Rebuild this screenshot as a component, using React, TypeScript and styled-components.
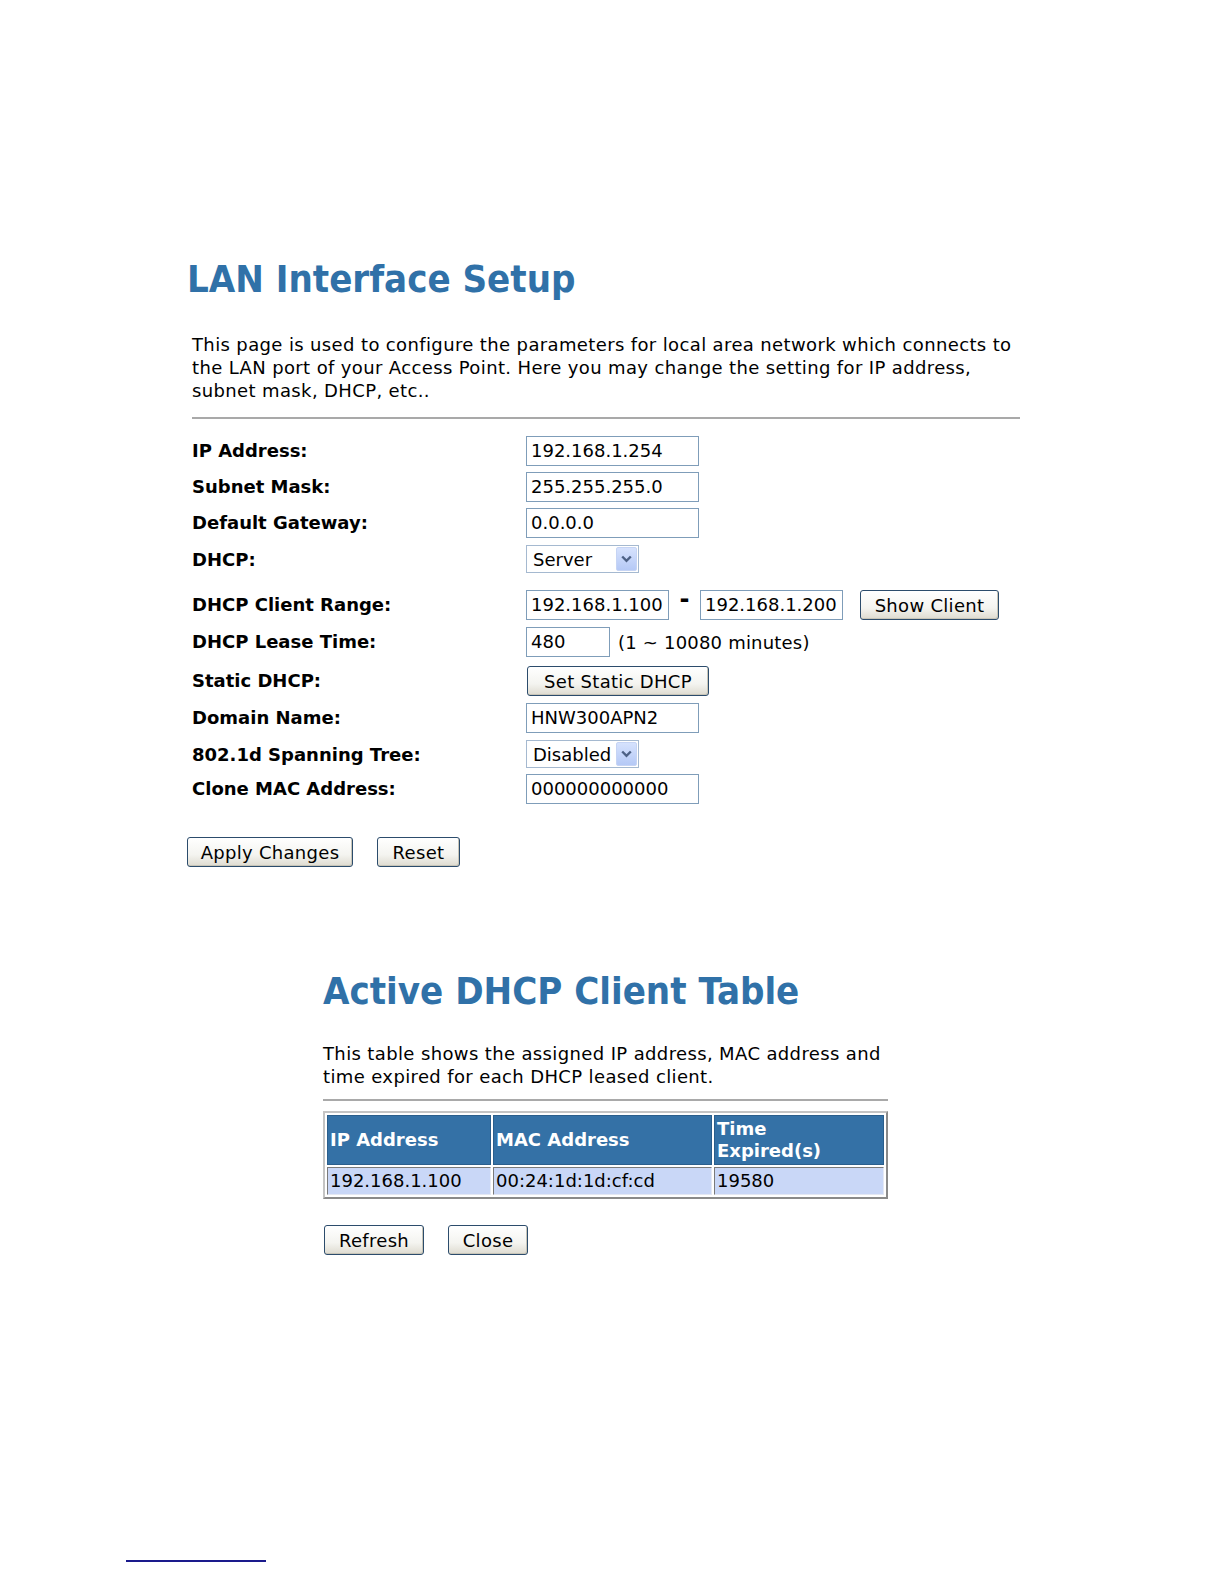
import styled, { createGlobalStyle } from "styled-components";

const GlobalStyle = createGlobalStyle`
  html, body {
    margin: 0;
    padding: 0;
    background: #fff;
    overflow: hidden;
  }
  body {
    font-family: "DejaVu Sans", Verdana, sans-serif;
    color: #000;
  }
`;

const Page = styled.div`
  width: 1224px;
  height: 1584px;
  overflow: hidden;
  padding-top: 256px;
  box-sizing: border-box;
`;

const Section = styled.section<{ $left: number; $width: number; $top?: number }>`
  margin-left: ${(p) => p.$left}px;
  margin-top: ${(p) => p.$top ?? 0}px;
  width: ${(p) => p.$width}px;
`;

const Title = styled.h1`
  margin: 0;
  font-family: "DejaVu Sans Condensed", "DejaVu Sans", Verdana, sans-serif;
  font-stretch: condensed;
  font-size: 38px;
  line-height: 46px;
  font-weight: bold;
  color: #3071a8;
  white-space: nowrap;
`;

const Intro = styled.p<{ $top: number; $indent?: number }>`
  margin: ${(p) => p.$top}px 0 0 ${(p) => p.$indent ?? 0}px;
  font-size: 18px;
  line-height: 23px;
  letter-spacing: 0.37px;
`;

const Rule = styled.div<{ $top: number; $indent?: number }>`
  margin: ${(p) => p.$top}px 0 0 ${(p) => p.$indent ?? 0}px;
  border-top: 2px solid #a9a9a9;
`;

const Form = styled.div`
  margin: 17px 0 0 5px;
`;

const Row = styled.div<{ $h: number }>`
  display: grid;
  grid-template-columns: 334px auto;
  align-items: start;
  height: ${(p) => p.$h}px;
`;

const Label = styled.div`
  font-size: 18px;
  font-weight: bold;
  line-height: 30px;
`;

const Controls = styled.div`
  display: flex;
  align-items: center;
`;

const Input = styled.div<{ $w: number }>`
  width: ${(p) => p.$w}px;
  height: 30px;
  box-sizing: border-box;
  border: 1px solid #7f9db9;
  padding-left: 4px;
  font-size: 18px;
  line-height: 28px;
  white-space: nowrap;
  background: #fff;
`;

const Select = styled.div`
  width: 113px;
  height: 28px;
  box-sizing: border-box;
  border: 1px solid #a5b9d0;
  display: flex;
  align-items: center;
  justify-content: space-between;
  padding: 0 1px 0 6px;
  font-size: 18px;
`;

const Arrow = styled.span`
  width: 21px;
  height: 24px;
  box-sizing: border-box;
  background: linear-gradient(#d6e2fd, #b5c9f6);
  border: 1px solid #c6d4f4;
  border-radius: 2px;
  display: flex;
  align-items: center;
  justify-content: center;
`;

const Dash = styled.span`
  width: 31px;
  text-align: center;
  font-weight: bold;
  font-size: 24px;
  line-height: 20px;
  margin-top: -12px;
`;

const Hint = styled.span`
  font-size: 18px;
  margin-left: 8px;
  letter-spacing: 0.2px;
`;

const Button = styled.button<{ $w: number; $ml?: number }>`
  width: ${(p) => p.$w}px;
  height: 30px;
  margin-left: ${(p) => p.$ml ?? 0}px;
  padding: 0;
  font-family: "DejaVu Sans", Verdana, sans-serif;
  font-size: 18px;
  letter-spacing: 0.3px;
  color: #000;
  border: 1px solid #2c4c6c;
  border-radius: 3px;
  background: linear-gradient(#ffffff 0%, #f4f4f0 60%, #dedbd0 100%);
  box-shadow: inset -1px -1px 0 #c8c5b8;
`;

const ButtonBar = styled.div<{ $top: number }>`
  display: flex;
  margin-top: ${(p) => p.$top}px;
`;

const Table = styled.table`
  margin-top: 10px;
  width: 565px;
  border-collapse: separate;
  border-spacing: 2px;
  border: 2px solid #c4c4c4;
  border-right-color: #8a8a8a;
  border-bottom-color: #8a8a8a;
  font-size: 18px;
  table-layout: fixed;
`;

const Head = styled.td`
  background: #3471a6;
  color: #fff;
  font-weight: bold;
  height: 50px;
  box-sizing: border-box;
  padding: 0 2px;
  border: 1px solid #2a5e8c;
  line-height: 22px;
  vertical-align: middle;
`;

const Cell = styled.td`
  background: #c9d7f7;
  height: 28px;
  box-sizing: border-box;
  padding: 0 2px;
  border: 1px solid;
  border-color: #7a7a7a #e4e8f4 #e4e8f4 #7a7a7a;
  line-height: 24px;
`;

const Footnote = styled.div`
  margin: 305px 0 0 126px;
  width: 140px;
  border-top: 2px solid #1a1a8c;
`;

const Chevron = () => (
  <svg width="11" height="8" viewBox="0 0 11 8">
    <path d="M1.2 1.5 L5.5 5.8 L9.8 1.5" fill="none" stroke="#4d6185" strokeWidth="2.4" />
  </svg>
);

const fields: { label: string; h: number; value: string }[] = [
  { label: "IP Address:", h: 36, value: "192.168.1.254" },
  { label: "Subnet Mask:", h: 36, value: "255.255.255.0" },
  { label: "Default Gateway:", h: 37, value: "0.0.0.0" },
];

export default function App() {
  return (
    <>
      <GlobalStyle />
      <Page>
        <Section $left={187} $width={833}>
          <Title>LAN Interface Setup</Title>
          <Intro $top={31} $indent={5}>
            This page is used to configure the parameters for local area network which connects to
            the LAN port of your Access Point. Here you may change the setting for IP address,
            subnet mask, DHCP, etc..
          </Intro>
          <Rule $top={15} $indent={5} />
          <Form>
            {fields.map((f) => (
              <Row key={f.label} $h={f.h}>
                <Label>{f.label}</Label>
                <Controls>
                  <Input $w={173}>{f.value}</Input>
                </Controls>
              </Row>
            ))}
            <Row $h={45}>
              <Label>DHCP:</Label>
              <Controls>
                <Select>
                  Server
                  <Arrow>
                    <Chevron />
                  </Arrow>
                </Select>
              </Controls>
            </Row>
            <Row $h={37}>
              <Label>DHCP Client Range:</Label>
              <Controls>
                <Input $w={143}>192.168.1.100</Input>
                <Dash>-</Dash>
                <Input $w={143}>192.168.1.200</Input>
                <Button $w={139} $ml={17}>Show Client</Button>
              </Controls>
            </Row>
            <Row $h={39}>
              <Label>DHCP Lease Time:</Label>
              <Controls>
                <Input $w={84}>480</Input>
                <Hint>(1 ~ 10080 minutes)</Hint>
              </Controls>
            </Row>
            <Row $h={37}>
              <Label>Static DHCP:</Label>
              <Controls>
                <Button $w={182} $ml={1}>Set Static DHCP</Button>
              </Controls>
            </Row>
            <Row $h={37}>
              <Label>Domain Name:</Label>
              <Controls>
                <Input $w={173}>HNW300APN2</Input>
              </Controls>
            </Row>
            <Row $h={34}>
              <Label>802.1d Spanning Tree:</Label>
              <Controls>
                <Select>
                  Disabled
                  <Arrow>
                    <Chevron />
                  </Arrow>
                </Select>
              </Controls>
            </Row>
            <Row $h={30}>
              <Label>Clone MAC Address:</Label>
              <Controls>
                <Input $w={173}>000000000000</Input>
              </Controls>
            </Row>
          </Form>
          <ButtonBar $top={33}>
            <Button $w={166}>Apply Changes</Button>
            <Button $w={83} $ml={24}>Reset</Button>
          </ButtonBar>
        </Section>

        <Section $left={323} $width={565} $top={101}>
          <Title>Active DHCP Client Table</Title>
          <Intro $top={28}>
            This table shows the assigned IP address, MAC address and time expired for each DHCP
            leased client.
          </Intro>
          <Rule $top={11} />
          <Table>
            <colgroup>
              <col style={{ width: 164 }} />
              <col style={{ width: 219 }} />
              <col />
            </colgroup>
            <tbody>
              <tr>
                <Head>IP Address</Head>
                <Head>MAC Address</Head>
                <Head>
                  Time
                  <br />
                  Expired(s)
                </Head>
              </tr>
              <tr>
                <Cell>192.168.1.100</Cell>
                <Cell>00:24:1d:1d:cf:cd</Cell>
                <Cell>19580</Cell>
              </tr>
            </tbody>
          </Table>
          <ButtonBar $top={26}>
            <Button $w={100} $ml={1}>Refresh</Button>
            <Button $w={80} $ml={24}>Close</Button>
          </ButtonBar>
        </Section>

        <Footnote />
      </Page>
    </>
  );
}
